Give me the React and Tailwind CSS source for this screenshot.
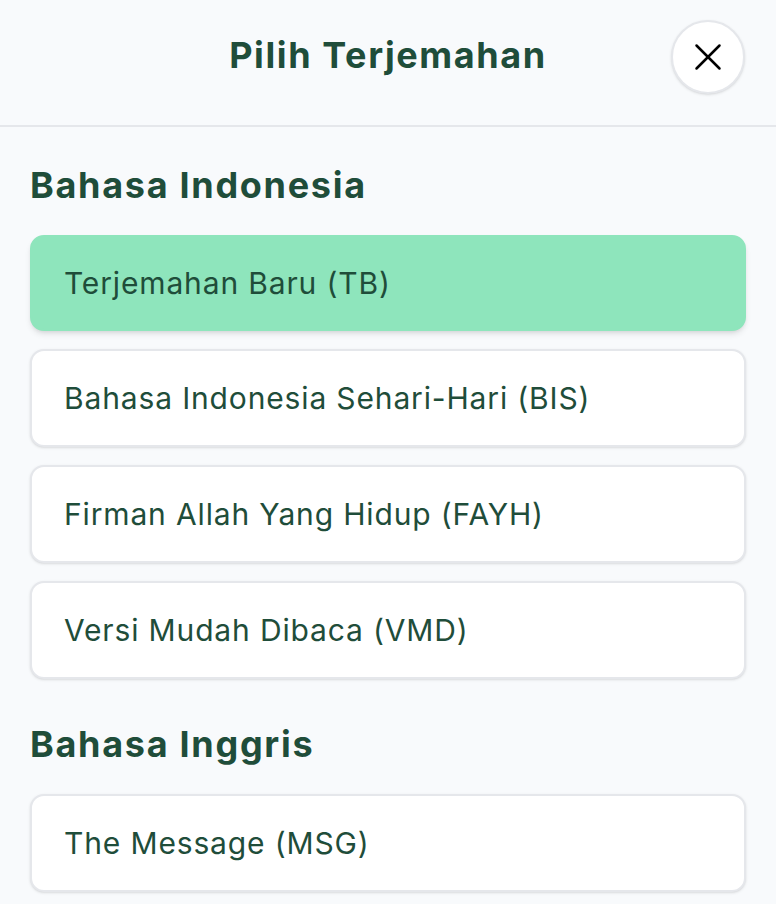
import React, { useState } from 'react';
import { X } from 'lucide-react';

const sections = [
    {
        title: "Bahasa Indonesia",
        items: [
            { id: "tb", label: "Terjemahan Baru (TB)" },
            { id: "bis", label: "Bahasa Indonesia Sehari-Hari (BIS)" },
            { id: "fayh", label: "Firman Allah Yang Hidup (FAYH)" },
            { id: "vmd", label: "Versi Mudah Dibaca (VMD)" },
        ],
    },
    {
        title: "Bahasa Inggris",
        items: [
            { id: "msg", label: "The Message (MSG)" },
        ],
    },
];

const App = () => {
    const [selected, setSelected] = useState("tb");

    return (
        <div className="min-h-screen bg-[#f8fafc] text-[#1f4d3a]" style={{ fontFamily: 'Inter, "Noto Sans", sans-serif' }}>
            {/* HEADER */}
            <div className="relative flex items-center justify-center h-[127px] border-b-2 border-[#e5e7eb] pb-4">
                <h1 className="text-[36px] leading-[40px] font-bold tracking-[1.6px]">Pilih Terjemahan</h1>
                <button className="absolute right-[31px] top-[20px] w-[74px] h-[74px] rounded-full bg-white border-2 border-[#e5e7eb] shadow-sm flex items-center justify-center text-black">
                    <X size={46} strokeWidth={1.3} />
                </button>
            </div>

            {/* LIST */}
            <div className="px-[30px] pt-[38px] flex flex-col gap-[45px]">
                {sections.map((section) => (
                    <div key={section.title}>
                        <h2 className="text-[36px] leading-[40px] font-bold tracking-[1.7px] mb-[30px]">{section.title}</h2>
                        <div className="flex flex-col gap-[18px]">
                            {section.items.map((item) => {
                                const active = item.id === selected;
                                return (
                                    <button
                                        key={item.id}
                                        onClick={() => setSelected(item.id)}
                                        className={
                                            active
                                                ? "h-[96px] rounded-[14px] border-2 border-[#8ee5bc] bg-[#8ee5bc] shadow-md text-left pl-[32px] text-[30px] tracking-[0.85px]"
                                                : "h-[98px] rounded-[14px] border-2 border-[#e5e7eb] bg-white shadow-sm text-left pl-[32px] text-[30px] tracking-[0.85px]"
                                        }
                                    >
                                        {item.label}
                                    </button>
                                );
                            })}
                        </div>
                    </div>
                ))}
            </div>
        </div>
    );
};

export default App;
